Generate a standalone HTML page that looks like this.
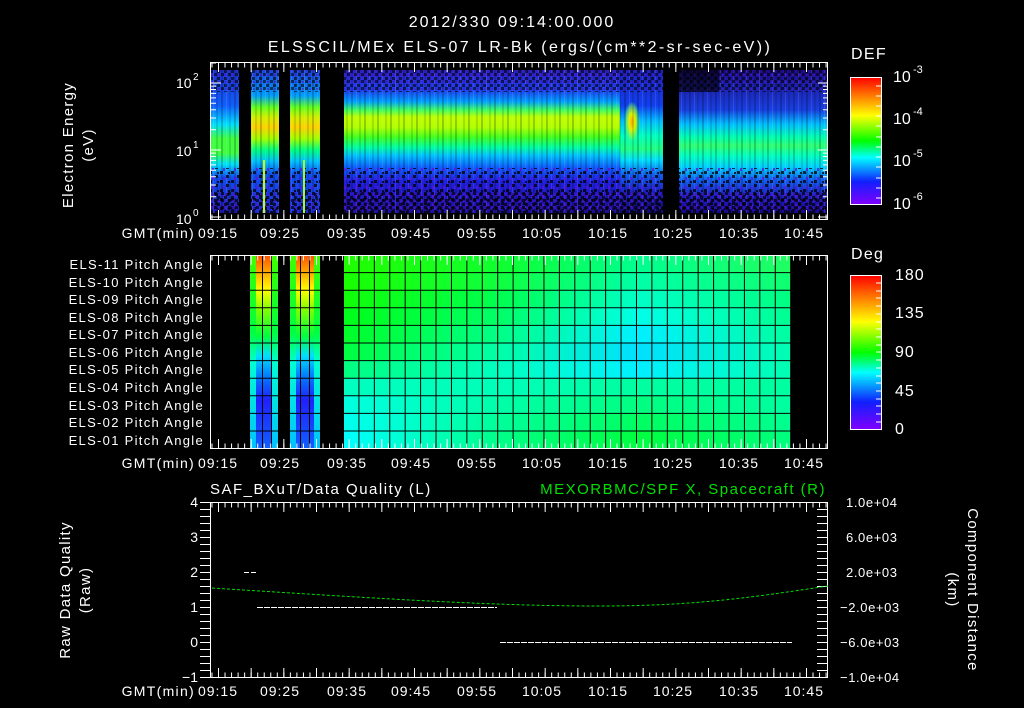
<!DOCTYPE html>
<html><head><meta charset="utf-8"><style>
html,body{margin:0;padding:0;background:#000;}
svg{display:block}
text{font-family:"Liberation Sans",sans-serif;fill:#fff}
.ls{letter-spacing:1.3px}
</style></head><body>
<svg width="1024" height="708" viewBox="0 0 1024 708" xmlns="http://www.w3.org/2000/svg">
<defs>
<linearGradient id="g1" x1="0" y1="70" x2="0" y2="213" gradientUnits="userSpaceOnUse">
<stop offset="0" stop-color="#3020c8"/><stop offset=".14" stop-color="#2040f0"/><stop offset=".22" stop-color="#00a0ff"/><stop offset=".28" stop-color="#40ff60"/><stop offset=".33" stop-color="#c0ff00"/><stop offset=".4" stop-color="#b0ff00"/><stop offset=".47" stop-color="#40ff20"/><stop offset=".54" stop-color="#00ffa0"/><stop offset=".6" stop-color="#00c0ff"/><stop offset=".68" stop-color="#1060ff"/><stop offset=".78" stop-color="#2020e0"/><stop offset="1" stop-color="#2010a0"/></linearGradient>
<linearGradient id="g2" x1="0" y1="70" x2="0" y2="213" gradientUnits="userSpaceOnUse">
<stop offset="0" stop-color="#2020c0"/><stop offset=".25" stop-color="#1040f0"/><stop offset=".36" stop-color="#00c0ff"/><stop offset=".46" stop-color="#00ffc0"/><stop offset=".55" stop-color="#20ff80"/><stop offset=".63" stop-color="#00e0ff"/><stop offset=".73" stop-color="#1060f0"/><stop offset=".85" stop-color="#2020c8"/><stop offset="1" stop-color="#100870"/></linearGradient>
<linearGradient id="g5" x1="0" y1="70" x2="0" y2="213" gradientUnits="userSpaceOnUse">
<stop offset="0" stop-color="#200c90"/><stop offset=".28" stop-color="#1840e0"/><stop offset=".38" stop-color="#00c0ff"/><stop offset=".47" stop-color="#00ffb0"/><stop offset=".53" stop-color="#30ff70"/><stop offset=".6" stop-color="#00ffc0"/><stop offset=".68" stop-color="#00d0ff"/><stop offset=".77" stop-color="#1060f0"/><stop offset=".88" stop-color="#2020c8"/><stop offset="1" stop-color="#180890"/></linearGradient>
<linearGradient id="g3" x1="0" y1="70" x2="0" y2="213" gradientUnits="userSpaceOnUse">
<stop offset="0" stop-color="#2030d0"/><stop offset=".25" stop-color="#1060ff"/><stop offset=".38" stop-color="#00e0ff"/><stop offset=".48" stop-color="#40ff40"/><stop offset=".58" stop-color="#40ff40"/><stop offset=".66" stop-color="#00e0ff"/><stop offset=".75" stop-color="#1050f0"/><stop offset="1" stop-color="#2018b0"/></linearGradient>
<linearGradient id="g4" x1="0" y1="70" x2="0" y2="213" gradientUnits="userSpaceOnUse">
<stop offset="0" stop-color="#2040e0"/><stop offset=".18" stop-color="#00a0ff"/><stop offset=".26" stop-color="#60ff20"/><stop offset=".33" stop-color="#d0f000"/><stop offset=".4" stop-color="#ffd000"/><stop offset=".48" stop-color="#a0ff00"/><stop offset=".56" stop-color="#00ff80"/><stop offset=".64" stop-color="#00c0ff"/><stop offset=".73" stop-color="#1050f0"/><stop offset="1" stop-color="#2030e0"/></linearGradient>
<radialGradient id="pk" cx="632" cy="122" r="16" gradientUnits="userSpaceOnUse" gradientTransform="translate(632 122) scale(0.5 1.3) translate(-632 -122)">
<stop offset="0" stop-color="#ffb000"/><stop offset=".4" stop-color="#e0f000"/><stop offset=".8" stop-color="#80ff40" stop-opacity=".5"/><stop offset="1" stop-color="#40ff80" stop-opacity="0"/></radialGradient>
<pattern id="nz" x="0" y="0" width="11" height="9" patternUnits="userSpaceOnUse">
<rect x="0" y="0" width="3" height="3" fill="#000"/><rect x="6" y="4" width="3" height="3" fill="#000"/><rect x="3" y="6" width="2" height="3" fill="#6010e0"/><rect x="8" y="1" width="2" height="2" fill="#000"/></pattern>
<pattern id="nz2" x="0" y="0" width="7" height="7" patternUnits="userSpaceOnUse">
<rect x="0" y="0" width="3" height="3" fill="#000"/><rect x="4" y="3" width="3" height="3" fill="#000"/><rect x="1" y="4" width="2" height="2" fill="#5010d0"/></pattern>
<pattern id="vs" x="0" y="0" width="13" height="10" patternUnits="userSpaceOnUse">
<rect x="0" y="0" width="2" height="10" fill="#000" opacity=".2"/><rect x="5" y="0" width="1" height="10" fill="#fff" opacity=".1"/><rect x="8" y="0" width="2" height="10" fill="#000" opacity=".12"/></pattern>
<linearGradient id="cb" x1="0" y1="0" x2="0" y2="1">
<stop offset="0" stop-color="#ff0000"/><stop offset=".15" stop-color="#ff8000"/><stop offset=".3" stop-color="#ffff00"/><stop offset=".5" stop-color="#00ff00"/><stop offset=".63" stop-color="#00ffff"/><stop offset=".82" stop-color="#1020ff"/><stop offset="1" stop-color="#8000ff"/></linearGradient>
<linearGradient id="lb" x1="0" y1="255" x2="0" y2="449" gradientUnits="userSpaceOnUse">
<stop offset="0" stop-color="#ff5000"/><stop offset=".08" stop-color="#ffa000"/><stop offset=".18" stop-color="#ffff00"/><stop offset=".28" stop-color="#80ff00"/><stop offset=".42" stop-color="#00ff40"/><stop offset=".52" stop-color="#00e0ff"/><stop offset=".62" stop-color="#0080ff"/><stop offset=".75" stop-color="#2020ff"/><stop offset="1" stop-color="#1060ff"/></linearGradient>
<linearGradient id="le" x1="0" y1="255" x2="0" y2="449" gradientUnits="userSpaceOnUse">
<stop offset="0" stop-color="#40ff00"/><stop offset=".4" stop-color="#00ff40"/><stop offset=".55" stop-color="#00ffd0"/><stop offset="1" stop-color="#00c0ff"/></linearGradient>
<linearGradient id="r0" x1="344" x2="791" gradientUnits="userSpaceOnUse"><stop offset="0" stop-color="#20ff00"/><stop offset=".35" stop-color="#10ff30"/><stop offset=".66" stop-color="#00ff90"/><stop offset="1" stop-color="#20ff60"/></linearGradient>
<linearGradient id="r1" x1="344" x2="791" gradientUnits="userSpaceOnUse"><stop offset="0" stop-color="#18ff00"/><stop offset=".35" stop-color="#10ff40"/><stop offset=".66" stop-color="#00ffa8"/><stop offset="1" stop-color="#10ff70"/></linearGradient>
<linearGradient id="r2" x1="344" x2="791" gradientUnits="userSpaceOnUse"><stop offset="0" stop-color="#10ff08"/><stop offset=".35" stop-color="#00ff50"/><stop offset=".66" stop-color="#00ffc8"/><stop offset="1" stop-color="#00ff80"/></linearGradient>
<linearGradient id="r3" x1="344" x2="791" gradientUnits="userSpaceOnUse"><stop offset="0" stop-color="#00ff18"/><stop offset=".35" stop-color="#00ff68"/><stop offset=".66" stop-color="#00ffe8"/><stop offset="1" stop-color="#00ff90"/></linearGradient>
<linearGradient id="r4" x1="344" x2="791" gradientUnits="userSpaceOnUse"><stop offset="0" stop-color="#00ff28"/><stop offset=".35" stop-color="#00ff88"/><stop offset=".66" stop-color="#00f0ff"/><stop offset="1" stop-color="#00ffa0"/></linearGradient>
<linearGradient id="r5" x1="344" x2="791" gradientUnits="userSpaceOnUse"><stop offset="0" stop-color="#00ff40"/><stop offset=".35" stop-color="#00ffa8"/><stop offset=".66" stop-color="#00e0ff"/><stop offset="1" stop-color="#00ffb0"/></linearGradient>
<linearGradient id="r6" x1="344" x2="791" gradientUnits="userSpaceOnUse"><stop offset="0" stop-color="#00ff80"/><stop offset=".35" stop-color="#00ffc0"/><stop offset=".66" stop-color="#00f0ff"/><stop offset="1" stop-color="#00ffb0"/></linearGradient>
<linearGradient id="r7" x1="344" x2="791" gradientUnits="userSpaceOnUse"><stop offset="0" stop-color="#00ffc0"/><stop offset=".35" stop-color="#00ffb8"/><stop offset=".66" stop-color="#00ffa0"/><stop offset="1" stop-color="#00ffa0"/></linearGradient>
<linearGradient id="r8" x1="344" x2="791" gradientUnits="userSpaceOnUse"><stop offset="0" stop-color="#00ffe0"/><stop offset=".35" stop-color="#00ffa8"/><stop offset=".66" stop-color="#00ff80"/><stop offset="1" stop-color="#00ffa0"/></linearGradient>
<linearGradient id="r9" x1="344" x2="791" gradientUnits="userSpaceOnUse"><stop offset="0" stop-color="#00fff0"/><stop offset=".35" stop-color="#00ff98"/><stop offset=".66" stop-color="#00ff60"/><stop offset="1" stop-color="#00ff90"/></linearGradient>
<linearGradient id="r10" x1="344" x2="791" gradientUnits="userSpaceOnUse"><stop offset="0" stop-color="#00ffff"/><stop offset=".35" stop-color="#00ff88"/><stop offset=".66" stop-color="#00ff40"/><stop offset="1" stop-color="#00ff80"/></linearGradient>
</defs>

<text x="512" y="27" font-size="16" text-anchor="middle" style="letter-spacing:2px">2012/330 09:14:00.000</text>
<text x="520" y="52" font-size="16" text-anchor="middle" style="letter-spacing:2.4px">ELSSCIL/MEx ELS-07 LR-Bk  (ergs/(cm**2-sr-sec-eV))</text>

<rect x="211" y="70" width="28" height="143" fill="url(#g3)"/>
<rect x="251" y="70" width="28" height="143" fill="url(#g4)"/>
<rect x="290" y="70" width="30" height="143" fill="url(#g4)"/>
<rect x="344" y="70" width="276" height="143" fill="url(#g1)"/>
<rect x="620" y="70" width="43" height="143" fill="url(#g2)"/>
<rect x="679" y="70" width="148" height="143" fill="url(#g5)"/>
<ellipse cx="632" cy="122" rx="8" ry="21" fill="url(#pk)"/>
<rect x="211" y="70" width="616" height="143" fill="url(#vs)"/>
<rect x="211" y="70" width="616" height="22" fill="url(#nz2)" opacity=".6"/>
<rect x="211" y="168" width="616" height="45" fill="url(#nz)" opacity=".75"/>
<rect x="211" y="192" width="616" height="21" fill="url(#nz2)" opacity=".7"/>
<rect x="239" y="66" width="12" height="150" fill="#000"/>
<rect x="279" y="66" width="11" height="150" fill="#000"/>
<rect x="320" y="66" width="24" height="150" fill="#000"/>
<rect x="663" y="66" width="16" height="150" fill="#000"/>
<rect x="679" y="70" width="40" height="22" fill="#000" opacity=".6"/>
<rect x="263" y="160" width="2" height="53" fill="#c0ff00"/>
<rect x="303" y="160" width="2" height="53" fill="#a0ff20"/>

<g stroke="#fff" fill="none">
<rect x="210.5" y="62.5" width="617" height="157"/>
<line x1="211.47" y1="65" x2="828" y2="65" stroke-width="5" stroke-dasharray="1 5.533"/>
<line x1="218" y1="67" x2="828" y2="67" stroke-width="10" stroke-dasharray="1 31.667"/>
<line x1="211.47" y1="217" x2="828" y2="217" stroke-width="5" stroke-dasharray="1 5.533"/>
<line x1="218" y1="215" x2="828" y2="215" stroke-width="10" stroke-dasharray="1 31.667"/>
<path d="M211 83h10M211 150h10M211 217h10M818 83h10M818 150h10M818 217h10"/>
<path d="M211 196.8h5M211 185h5M211 176.7h5M211 170.2h5M211 164.9h5M211 160.4h5M211 156.5h5M211 153.1h5M211 129.8h5M211 118h5M211 109.7h5M211 103.2h5M211 97.9h5M211 93.4h5M211 89.5h5M211 86.1h5M211 63h5"/>
<path d="M823 196.8h5M823 185h5M823 176.7h5M823 170.2h5M823 164.9h5M823 160.4h5M823 156.5h5M823 153.1h5M823 129.8h5M823 118h5M823 109.7h5M823 103.2h5M823 97.9h5M823 93.4h5M823 89.5h5M823 86.1h5"/>
</g>
<text x="176" y="88" font-size="14">10</text><text x="193" y="80" font-size="10">2</text>
<text x="176" y="156" font-size="14">10</text><text x="193" y="148" font-size="10">1</text>
<text x="176" y="224" font-size="14">10</text><text x="193" y="216" font-size="10">0</text>
<text transform="translate(73 145) rotate(-90)" font-size="15" text-anchor="middle" class="ls">Electron Energy</text>
<text transform="translate(93 145) rotate(-90)" font-size="15" text-anchor="middle" class="ls">(eV)</text>
<g font-size="14" text-anchor="middle" style="letter-spacing:1px">
<text x="218" y="238">09:15</text><text x="280" y="238">09:25</text><text x="347" y="238">09:35</text><text x="411" y="238">09:45</text><text x="477" y="238">09:55</text><text x="542" y="238">10:05</text><text x="608" y="238">10:15</text><text x="673" y="238">10:25</text><text x="739" y="238">10:35</text><text x="804" y="238">10:45</text>
</g>
<text x="195" y="238" font-size="14" text-anchor="end" class="ls">GMT(min)</text>

<text x="851" y="59" font-size="16" class="ls">DEF</text>
<rect x="850.5" y="77.5" width="31" height="127" fill="url(#cb)" stroke="#fff"/>
<g stroke="#fff"><path d="M876 86h5M876 96h5M876 106h5M876 116h5M876 126h5M876 137h5M876 147h5M876 157h5M876 167h5M876 178h5M876 188h5M876 198h5"/></g>
<g font-size="16"><text x="893" y="82">10</text><text x="913" y="73" font-size="11">-3</text>
<text x="893" y="124">10</text><text x="913" y="115" font-size="11">-4</text>
<text x="893" y="166">10</text><text x="913" y="157" font-size="11">-5</text>
<text x="893" y="209">10</text><text x="913" y="200" font-size="11">-6</text></g>

<rect x="344" y="255" width="447" height="17.7" fill="url(#r0)"/>
<rect x="344" y="272.6" width="447" height="17.7" fill="url(#r1)"/>
<rect x="344" y="290.2" width="447" height="17.7" fill="url(#r2)"/>
<rect x="344" y="307.8" width="447" height="17.7" fill="url(#r3)"/>
<rect x="344" y="325.4" width="447" height="17.7" fill="url(#r4)"/>
<rect x="344" y="343" width="447" height="17.7" fill="url(#r5)"/>
<rect x="344" y="360.6" width="447" height="17.7" fill="url(#r6)"/>
<rect x="344" y="378.2" width="447" height="17.7" fill="url(#r7)"/>
<rect x="344" y="395.8" width="447" height="17.7" fill="url(#r8)"/>
<rect x="344" y="413.4" width="447" height="17.7" fill="url(#r9)"/>
<rect x="344" y="431" width="447" height="18" fill="url(#r10)"/>
<rect x="250" y="255" width="28" height="194" fill="url(#lb)"/>
<rect x="290" y="255" width="30" height="194" fill="url(#lb)"/>
<rect x="250" y="255" width="6" height="194" fill="url(#le)"/>
<rect x="272" y="255" width="6" height="194" fill="url(#le)"/>
<rect x="290" y="255" width="6" height="194" fill="url(#le)"/>
<rect x="314" y="255" width="6" height="194" fill="url(#le)"/>
<g stroke="#000" stroke-width="1">
<line x1="344" y1="352" x2="791" y2="352" stroke-width="194" stroke-dasharray="1 14.42" stroke-dashoffset="-14.42"/>
<path d="M250 272.6h70M250 290.2h70M250 307.8h70M250 325.4h70M250 343h70M250 360.6h70M250 378.2h70M250 395.8h70M250 413.4h70M250 431h70"/>
<path d="M344 272.6h447M344 290.2h447M344 307.8h447M344 325.4h447M344 343h447M344 360.6h447M344 378.2h447M344 395.8h447M344 413.4h447M344 431h447"/>
<path d="M262.5 255v194M271.5 255v194M300.5 255v194M309.5 255v194"/>
</g>
<g stroke="#fff" fill="none">
<rect x="210.5" y="255.5" width="617" height="193"/>
<line x1="211.47" y1="258" x2="828" y2="258" stroke-width="5" stroke-dasharray="1 5.533"/>
<line x1="218" y1="260" x2="828" y2="260" stroke-width="10" stroke-dasharray="1 31.667"/>
<line x1="211.47" y1="446" x2="828" y2="446" stroke-width="5" stroke-dasharray="1 5.533"/>
<line x1="218" y1="444" x2="828" y2="444" stroke-width="10" stroke-dasharray="1 31.667"/>
</g>
<g font-size="13" text-anchor="end" style="letter-spacing:1.3px">
<text x="204" y="269">ELS-11 Pitch Angle</text><text x="204" y="287">ELS-10 Pitch Angle</text><text x="204" y="304">ELS-09 Pitch Angle</text><text x="204" y="322">ELS-08 Pitch Angle</text><text x="204" y="339">ELS-07 Pitch Angle</text><text x="204" y="357">ELS-06 Pitch Angle</text><text x="204" y="374">ELS-05 Pitch Angle</text><text x="204" y="392">ELS-04 Pitch Angle</text><text x="204" y="410">ELS-03 Pitch Angle</text><text x="204" y="427">ELS-02 Pitch Angle</text><text x="204" y="445">ELS-01 Pitch Angle</text>
</g>
<g font-size="14" text-anchor="middle" style="letter-spacing:1px">
<text x="218" y="468">09:15</text><text x="280" y="468">09:25</text><text x="347" y="468">09:35</text><text x="411" y="468">09:45</text><text x="477" y="468">09:55</text><text x="542" y="468">10:05</text><text x="608" y="468">10:15</text><text x="673" y="468">10:25</text><text x="739" y="468">10:35</text><text x="804" y="468">10:45</text>
</g>
<text x="195" y="468" font-size="14" text-anchor="end" class="ls">GMT(min)</text>

<text x="851" y="259" font-size="16" class="ls">Deg</text>
<rect x="850.5" y="275.5" width="31" height="154" fill="url(#cb)" stroke="#fff"/>
<g stroke="#fff"><path d="M876 283h5M876 291h5M876 298h5M876 306h5M876 314h5M876 322h5M876 329h5M876 337h5M876 345h5M876 352h5M876 360h5M876 368h5M876 376h5M876 383h5M876 391h5M876 399h5M876 406h5M876 414h5M876 422h5"/></g>
<g font-size="16" style="letter-spacing:1px"><text x="895" y="280">180</text><text x="895" y="318">135</text><text x="895" y="357">90</text><text x="895" y="396">45</text><text x="895" y="434">0</text></g>

<text x="210" y="494" font-size="15" style="letter-spacing:1.5px">SAF_BXuT/Data Quality (L)</text>
<text x="826" y="494" font-size="15" text-anchor="end" style="fill:#00e000;letter-spacing:1.5px">MEXORBMC/SPF X, Spacecraft (R)</text>
<g stroke="#fff" fill="none">
<rect x="210.5" y="502.5" width="617" height="175"/>
<line x1="211.47" y1="505" x2="828" y2="505" stroke-width="5" stroke-dasharray="1 5.533"/>
<line x1="218" y1="507" x2="828" y2="507" stroke-width="10" stroke-dasharray="1 31.667"/>
<line x1="211.47" y1="675" x2="828" y2="675" stroke-width="5" stroke-dasharray="1 5.533"/>
<line x1="218" y1="673" x2="828" y2="673" stroke-width="10" stroke-dasharray="1 31.667"/>
<line x1="205" y1="502" x2="205" y2="678" stroke-width="10" stroke-dasharray="1 6"/>
<line x1="822" y1="502" x2="822" y2="678" stroke-width="10" stroke-dasharray="1 6"/>
<path d="M200 502.5h10M200 537.5h10M200 572.5h10M200 607.5h10M200 642.5h10M200 677.5h10"/>
<path d="M244 572.5h5M251 572.5h5"/>
<path d="M257 607.5h240" stroke-dasharray="6 1"/>
<path d="M500 642.5h292" stroke-dasharray="6 1"/>
</g>
<path d="M212 588 C 400 600, 500 606, 600 606 S 760 596, 828 586" stroke="#00e000" fill="none" stroke-width="1" stroke-dasharray="3 2"/>
<g font-size="14" text-anchor="end"><text x="198" y="507">4</text><text x="198" y="542">3</text><text x="198" y="577">2</text><text x="198" y="612">1</text><text x="198" y="647">0</text><text x="198" y="682">−1</text></g>
<g font-size="13" style="letter-spacing:.6px"><text x="846" y="507">1.0e+04</text><text x="846" y="542">6.0e+03</text><text x="846" y="577">2.0e+03</text><text x="840" y="612">−2.0e+03</text><text x="840" y="647">−6.0e+03</text><text x="840" y="682">−1.0e+04</text></g>
<text transform="translate(70 590) rotate(-90)" font-size="15" text-anchor="middle" class="ls">Raw Data Quality</text>
<text transform="translate(90 590) rotate(-90)" font-size="15" text-anchor="middle" class="ls">(Raw)</text>
<text transform="translate(968 590) rotate(90)" font-size="15" text-anchor="middle" class="ls">Component Distance</text>
<text transform="translate(948 590) rotate(90)" font-size="15" text-anchor="middle" class="ls">(km)</text>
<g font-size="14" text-anchor="middle" style="letter-spacing:1px">
<text x="218" y="696">09:15</text><text x="280" y="696">09:25</text><text x="347" y="696">09:35</text><text x="411" y="696">09:45</text><text x="477" y="696">09:55</text><text x="542" y="696">10:05</text><text x="608" y="696">10:15</text><text x="673" y="696">10:25</text><text x="739" y="696">10:35</text><text x="804" y="696">10:45</text>
</g>
<text x="195" y="696" font-size="14" text-anchor="end" class="ls">GMT(min)</text>
</svg>
</body></html>
